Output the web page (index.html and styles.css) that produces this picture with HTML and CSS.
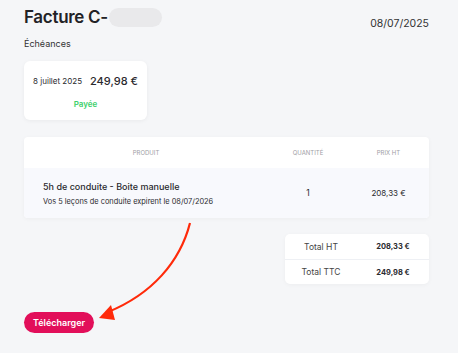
FILE: index.html
```html
<!DOCTYPE html>
<html lang="fr">
<head>
    <meta charset="UTF-8">
    <title>Facture</title>
    <link rel="stylesheet" href="styles.css">
</head>
<body>
    <div class="page">
        <div class="head">
            <h1>Facture C-<span class="redacted"></span></h1>
            <span class="date">08/07/2025</span>
        </div>

        <h2 class="section-title">Échéances</h2>
        <div class="due-card">
            <div class="due-row">
                <span class="due-date">8 juillet 2025</span>
                <span class="due-amount">249,98 €</span>
            </div>
            <span class="due-status">Payée</span>
        </div>

        <div class="table-card">
            <div class="table-head">
                <span class="col-product">Produit</span>
                <span class="col-qty">Quantité</span>
                <span class="col-price">Prix HT</span>
            </div>
            <div class="table-row">
                <div class="col-product product-info">
                    <span class="product-name">5h de conduite - Boite manuelle</span>
                    <span class="product-note">Vos 5 leçons de conduite expirent le 08/07/2026</span>
                </div>
                <span class="col-qty">1</span>
                <span class="col-price">208,33 €</span>
            </div>
        </div>

        <div class="totals">
            <div class="total-row">
                <span class="total-label">Total HT</span>
                <span class="total-value">208,33 €</span>
            </div>
            <div class="total-row">
                <span class="total-label">Total TTC</span>
                <span class="total-value">249,98 €</span>
            </div>
        </div>

        <button class="download-btn">Télécharger</button>
    </div>

    <!-- annotation arrow -->
    <svg class="arrow" width="458" height="353" viewBox="0 0 458 353">
        <path d="M190 223 C 180 262, 152 294, 108 312" fill="none" stroke="#ff2a0a" stroke-width="2.2"/>
        <polygon points="99,318 111,305 115,320" fill="#ff2a0a"/>
    </svg>
</body>
</html>
```

FILE: styles.css
```css
* {
    margin: 0;
    padding: 0;
    box-sizing: border-box;
}

body {
    font-family: 'Inter', 'Noto Sans', sans-serif;
    background: #f5f6f8;
    color: #2a2a2e;
    width: 458px;
    height: 353px;
    overflow: hidden;
    position: relative;
}

.page {
    padding: 7px 29px 0 24px;
    display: flex;
    flex-direction: column;
}

.head {
    display: flex;
    justify-content: space-between;
    align-items: center;
    height: 20px;
}

.head h1 {
    font-size: 17px;
    font-weight: 600;
    display: flex;
    align-items: center;
    letter-spacing: -0.3px;
    color: #222226;
}

.redacted {
    display: inline-block;
    width: 53px;
    height: 19px;
    border-radius: 10px;
    background: #e9e9eb;
    margin-left: 1px;
}

.date {
    font-size: 10.5px;
    color: #333;
    margin-top: 12px;
}

.section-title {
    font-size: 9px;
    font-weight: 400;
    margin-top: 11px;
    color: #333;
}

.due-card {
    margin-top: 12px;
    width: 123px;
    height: 59px;
    background: #fff;
    border-radius: 6px;
    box-shadow: 0 1px 4px rgba(0, 0, 0, 0.05);
    display: flex;
    flex-direction: column;
    align-items: center;
    padding-top: 13px;
}

.due-row {
    display: flex;
    align-items: center;
    gap: 8px;
}

.due-date {
    font-size: 8px;
}

.due-amount {
    font-size: 11px;
    font-weight: 500;
}

.due-status {
    margin-top: 11px;
    font-size: 8px;
    font-weight: 600;
    color: #3ccf6b;
}

.table-card {
    margin-top: 17px;
    background: #fff;
    border-radius: 4px;
    overflow: hidden;
    box-shadow: 0 1px 4px rgba(0, 0, 0, 0.04);
}

.table-head,
.table-row {
    display: grid;
    grid-template-columns: 244px 80px 1fr;
    align-items: center;
}

.table-head {
    height: 31px;
    font-size: 6px;
    text-transform: uppercase;
    color: #a0a0a5;
    text-align: center;
}

.table-row {
    height: 50px;
    background: #f8f9fd;
    font-size: 8.5px;
    text-align: center;
}

.product-info {
    text-align: left;
    padding-left: 19px;
    display: flex;
    flex-direction: column;
    gap: 5px;
}

.product-name {
    font-size: 9px;
    font-weight: 500;
}

.product-note {
    font-size: 7.4px;
}

.table-row .col-price {
    font-size: 8px;
}

.totals {
    margin-top: 16px;
    align-self: flex-end;
    width: 144px;
    background: #fff;
    border-radius: 5px;
    box-shadow: 0 1px 4px rgba(0, 0, 0, 0.04);
}

.total-row {
    display: grid;
    grid-template-columns: 72px 1fr;
    align-items: center;
    height: 25px;
    text-align: center;
    font-size: 8.5px;
}

.total-row + .total-row {
    border-top: 1px solid #eef0f4;
}

.total-label {
    color: #444;
}

.total-value {
    font-size: 7.5px;
    font-weight: 700;
}

.download-btn {
    margin-top: 28px;
    align-self: flex-start;
    width: 70px;
    height: 21px;
    border: none;
    border-radius: 11px;
    background: #e20f5a;
    color: #fff;
    font-family: inherit;
    font-size: 9px;
    font-weight: 600;
}

.arrow {
    position: absolute;
    left: 0;
    top: 0;
    pointer-events: none;
}
```
